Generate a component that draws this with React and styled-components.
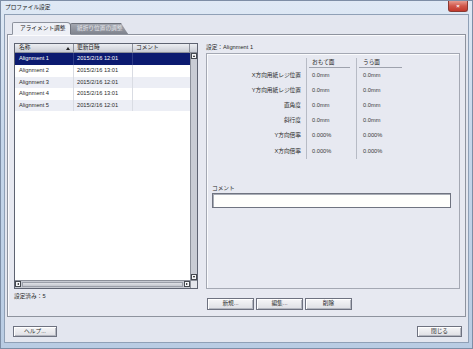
import React from "react";
import styled, { createGlobalStyle } from "styled-components";

const Global = createGlobalStyle`
  html, body { margin: 0; padding: 0; background: #fff; }
  body {
    font-family: "Liberation Sans", "Noto Sans CJK JP", sans-serif;
    font-size: 5.7px;
    color: #222;
  }
  * { box-sizing: border-box; }
`;

const Window = styled.div`
  width: 473px;
  height: 349px;
  display: flex;
  flex-direction: column;
  background: linear-gradient(#dfe9f5, #c5d6ea 40%, #b9cce3);
  border: 1px solid #7d8ea6;
  padding: 0 3px 5px 3px;
`;

const TitleBar = styled.div`
  height: 13px;
  display: flex;
  align-items: center;
  justify-content: space-between;
  padding-left: 1px;
`;

const Title = styled.span`
  color: #1c1c1c;
  line-height: 1;
`;

const CloseBtn = styled.div`
  width: 20px;
  height: 11px;
  margin-top: -2px;
  margin-right: 1px;
  border: 1px solid #8a3a32;
  border-top: none;
  border-radius: 0 0 3px 3px;
  background: linear-gradient(#e79c90, #d0574a 50%, #c3392c);
  color: #fff;
  font-size: 6px;
  font-weight: bold;
  display: flex;
  align-items: center;
  justify-content: center;
`;

const Client = styled.div`
  flex: 1;
  background: #e3e6ef;
  border: 1px solid #8fa0b6;
  padding: 6px 2px 5px 2px;
  display: flex;
  flex-direction: column;
`;

const TabStrip = styled.div`
  display: flex;
  align-items: flex-end;
  height: 13px;
  padding-left: 5px;
  position: relative;
  z-index: 1;
`;

const Tab = styled.div`
  height: ${(p) => (p.$active ? "13px" : "11px")};
  width: ${(p) => p.$w}px;
  display: flex;
  align-items: center;
  padding-left: ${(p) => (p.$active ? "7px" : "6px")};
  margin-left: ${(p) => (p.$active ? "0" : "-1px")};
  line-height: 1;
  color: ${(p) => (p.$active ? "#222" : "#e4e5ea")};
  background: ${(p) =>
    p.$active ? "#eef0f6" : "linear-gradient(#a4a7b0, #7f838d)"};
  border: 1px solid ${(p) => (p.$active ? "#8d929d" : "#6f737d")};
  border-bottom: ${(p) => (p.$active ? "1px solid #eef0f6" : "none")};
  border-radius: 2px 4px 0 0;
  clip-path: ${(p) =>
    p.$active ? "none" : "polygon(0 0, 88% 0, 100% 100%, 0 100%)"};
  margin-bottom: ${(p) => (p.$active ? "-1px" : "0")};
`;

const Panel = styled.div`
  height: 283px;
  border: 1px solid #8e939e;
  box-shadow: inset 1px 1px 0 #fbfbfd;
  background: #e7e9f1;
  display: grid;
  grid-template-columns: 184px 254px;
  grid-template-rows: 246px 1fr;
  column-gap: 8px;
  padding: 8px 0 0 6px;
`;

const ListBox = styled.div`
  border: 1px solid #5e6371;
  display: flex;
  flex-direction: column;
  background: #fff;
`;

const HeaderRow = styled.div`
  display: grid;
  grid-template-columns: 59px 59px 1fr 7px;
  height: 9px;
  border-bottom: 1px solid #8c909a;
`;

const HeaderCell = styled.div`
  background: linear-gradient(#eceef2, #c9ccd4);
  border-right: 1px solid #8c909a;
  display: flex;
  align-items: center;
  justify-content: space-between;
  padding: 0 3px 0 ${(p) => (p.$first ? "4px" : "3px")};
  line-height: 1;
  color: #222;
  &:last-child { border-right: none; }
`;

const SortArrow = styled.span`
  width: 0;
  height: 0;
  border-left: 2px solid transparent;
  border-right: 2px solid transparent;
  border-bottom: 3px solid #222;
`;

const ListBody = styled.div`
  flex: 1;
  display: flex;
  min-height: 0;
`;

const Rows = styled.div`
  flex: 1;
  background: #fff;
`;

const Row = styled.div`
  display: grid;
  grid-template-columns: 59px 59px 1fr;
  height: ${(p) => (p.$first ? "12px" : "11.6px")};
  background: ${(p) => (p.$sel ? "#0b1a70" : p.$alt ? "#eceef5" : "#fff")};
  color: ${(p) => (p.$sel ? "#fff" : "#2a2a2a")};
`;

const Cell = styled.div`
  display: flex;
  align-items: center;
  padding-left: ${(p) => (p.$first ? "4px" : "3px")};
  border-right: 1px solid ${(p) => (p.$sel ? "#2d3b86" : "#d9dce3")};
  line-height: 1;
  white-space: nowrap;
  &:last-child { border-right: none; }
`;

const VScroll = styled.div`
  width: 7px;
  background: #c9ccd4;
  border-left: 1px solid #8c909a;
  display: flex;
  flex-direction: column;
  justify-content: space-between;
`;

const HScrollRow = styled.div`
  height: 8px;
  display: flex;
  border-top: 1px solid #8c909a;
`;

const HScroll = styled.div`
  flex: 1;
  display: flex;
  background: #c6c9d1;
`;

const Thumb = styled.div`
  flex: 1;
  margin: 1px 1px;
  background: linear-gradient(#dfe1e6, #c2c5cd);
  border: 1px solid #9a9ea8;
`;

const Corner = styled.div`
  width: 7px;
  background: #e4e6ec;
  border-left: 1px solid #8c909a;
`;

const ArrowBox = styled.div`
  width: 6px;
  height: 6px;
  background: #f4f5f7;
  border: 1px solid #44484f;
  display: flex;
  align-items: center;
  justify-content: center;
  flex-shrink: 0;
  &::after {
    content: "";
    width: 0;
    height: 0;
    ${(p) =>
      p.$dir === "up"
        ? "border-left:1.5px solid transparent;border-right:1.5px solid transparent;border-bottom:2px solid #111;"
        : p.$dir === "down"
        ? "border-left:1.5px solid transparent;border-right:1.5px solid transparent;border-top:2px solid #111;"
        : p.$dir === "left"
        ? "border-top:1.5px solid transparent;border-bottom:1.5px solid transparent;border-right:2px solid #111;"
        : "border-top:1.5px solid transparent;border-bottom:1.5px solid transparent;border-left:2px solid #111;"}
  }
`;

const RightCol = styled.div`
  display: flex;
  flex-direction: column;
`;

const SectionTitle = styled.div`
  height: 10px;
  display: flex;
  align-items: center;
  line-height: 1;
  color: #2a2a2a;
`;

const GroupBox = styled.div`
  flex: 1;
  border: 1px solid #a4a8b3;
  box-shadow: inset 1px 1px 0 #fafbfd;
  padding-top: 4px;
  display: flex;
  flex-direction: column;
`;

const ValueGrid = styled.div`
  display: grid;
  grid-template-columns: 99px 50px 50px;
  grid-auto-rows: 15.2px;
  grid-template-rows: 10px;
  padding-bottom: 2px;
`;

const Label = styled.div`
  padding-right: 5px;
  display: flex;
  align-items: center;
  justify-content: flex-end;
  color: #2a2a2a;
  line-height: 1;
  white-space: nowrap;
`;

const Value = styled.div`
  border-left: 1px solid #b7bbc5;
  padding-left: ${(p) => (p.$second ? "6px" : "5px")};
  display: flex;
  align-items: center;
  color: #3a3a3a;
  line-height: 1;
  white-space: nowrap;
`;

const ColHead = styled.div`
  border-left: 1px solid #b7bbc5;
  padding-left: 2px;
  padding-right: ${(p) => (p.$second ? "4px" : "6px")};
  display: flex;
  align-items: flex-end;
`;

const ColHeadText = styled.div`
  flex: 1;
  border-bottom: 1px solid #9ea2ad;
  padding: 0 0 1px ${(p) => (p.$second ? "4px" : "3px")};
  line-height: 1;
  color: #2a2a2a;
`;

const CommentLabel = styled.div`
  margin: 25px 0 1px 5px;
  line-height: 1;
  color: #2a2a2a;
`;

const CommentInput = styled.div`
  height: 15px;
  margin: 0 8px 0 5px;
  background: #fefefc;
  border: 1px solid #6f7380;
  box-shadow: inset 1px 1px 0 #a9adb6;
`;

const StatusText = styled.div`
  padding-top: 5px;
  line-height: 1;
  color: #2a2a2a;
`;

const ButtonRow = styled.div`
  display: flex;
  gap: 2px;
  padding-top: 9px;
  padding-left: 1px;
  align-items: flex-start;
`;

const Button = styled.div`
  width: ${(p) => p.$w || 47}px;
  height: ${(p) => p.$h || 12}px;
  display: flex;
  align-items: center;
  justify-content: center;
  background: linear-gradient(#f6f6f8, #dedfe4);
  border: 1px solid #6e7280;
  box-shadow: inset 1px 1px 0 #fff, inset -1px -1px 0 #b4b7c0;
  line-height: 1;
  color: #2a2a2a;
`;

const Footer = styled.div`
  display: flex;
  justify-content: space-between;
  padding: 9px 4px 0 6px;
`;

const rows = [
  { name: "Alignment 1", date: "2015/2/16 12:01" },
  { name: "Alignment 2", date: "2015/2/16 13:01" },
  { name: "Alignment 3", date: "2015/2/16 12:01" },
  { name: "Alignment 4", date: "2015/2/16 13:01" },
  { name: "Alignment 5", date: "2015/2/16 12:01" },
];

const settings = [
  ["X方向用紙レジ位置", "0.0mm", "0.0mm"],
  ["Y方向用紙レジ位置", "0.0mm", "0.0mm"],
  ["直角度", "0.0mm", "0.0mm"],
  ["斜行度", "0.0mm", "0.0mm"],
  ["Y方向倍率", "0.000%", "0.000%"],
  ["X方向倍率", "0.000%", "0.000%"],
];

export default function App() {
  return (
    <>
      <Global />
      <Window>
        <TitleBar>
          <Title>プロファイル設定</Title>
          <CloseBtn>×</CloseBtn>
        </TitleBar>
        <Client>
          <TabStrip>
            <Tab $active $w={59}>アライメント調整</Tab>
            <Tab $w={58}>紙折り位置の調整</Tab>
          </TabStrip>
          <Panel>
            <ListBox>
              <HeaderRow>
                <HeaderCell $first>
                  名称<SortArrow />
                </HeaderCell>
                <HeaderCell>更新日時</HeaderCell>
                <HeaderCell>コメント</HeaderCell>
                <HeaderCell />
              </HeaderRow>
              <ListBody>
                <Rows>
                  {rows.map((r, i) => (
                    <Row key={r.name} $first={i === 0} $sel={i === 0} $alt={i % 2 === 0}>
                      <Cell $first $sel={i === 0}>{r.name}</Cell>
                      <Cell $sel={i === 0}>{r.date}</Cell>
                      <Cell $sel={i === 0} />
                    </Row>
                  ))}
                </Rows>
                <VScroll>
                  <ArrowBox $dir="up" />
                  <ArrowBox $dir="down" />
                </VScroll>
              </ListBody>
              <HScrollRow>
                <HScroll>
                  <ArrowBox $dir="left" />
                  <Thumb />
                  <ArrowBox $dir="right" />
                </HScroll>
                <Corner />
              </HScrollRow>
            </ListBox>
            <RightCol>
              <SectionTitle>設定：Alignment 1</SectionTitle>
              <GroupBox>
                <ValueGrid>
                  <Label />
                  <ColHead>
                    <ColHeadText>おもて面</ColHeadText>
                  </ColHead>
                  <ColHead $second>
                    <ColHeadText $second>うら面</ColHeadText>
                  </ColHead>
                  {settings.map(([l, a, b]) => (
                    <React.Fragment key={l}>
                      <Label>{l}</Label>
                      <Value>{a}</Value>
                      <Value $second>{b}</Value>
                    </React.Fragment>
                  ))}
                </ValueGrid>
                <CommentLabel>コメント</CommentLabel>
                <CommentInput />
              </GroupBox>
            </RightCol>
            <StatusText>設定済み：5</StatusText>
            <ButtonRow>
              <Button>新規...</Button>
              <Button>編集...</Button>
              <Button>削除</Button>
            </ButtonRow>
          </Panel>
          <Footer>
            <Button $w={44} $h={11}>ヘルプ...</Button>
            <Button $w={45} $h={11}>閉じる</Button>
          </Footer>
        </Client>
      </Window>
    </>
  );
}
